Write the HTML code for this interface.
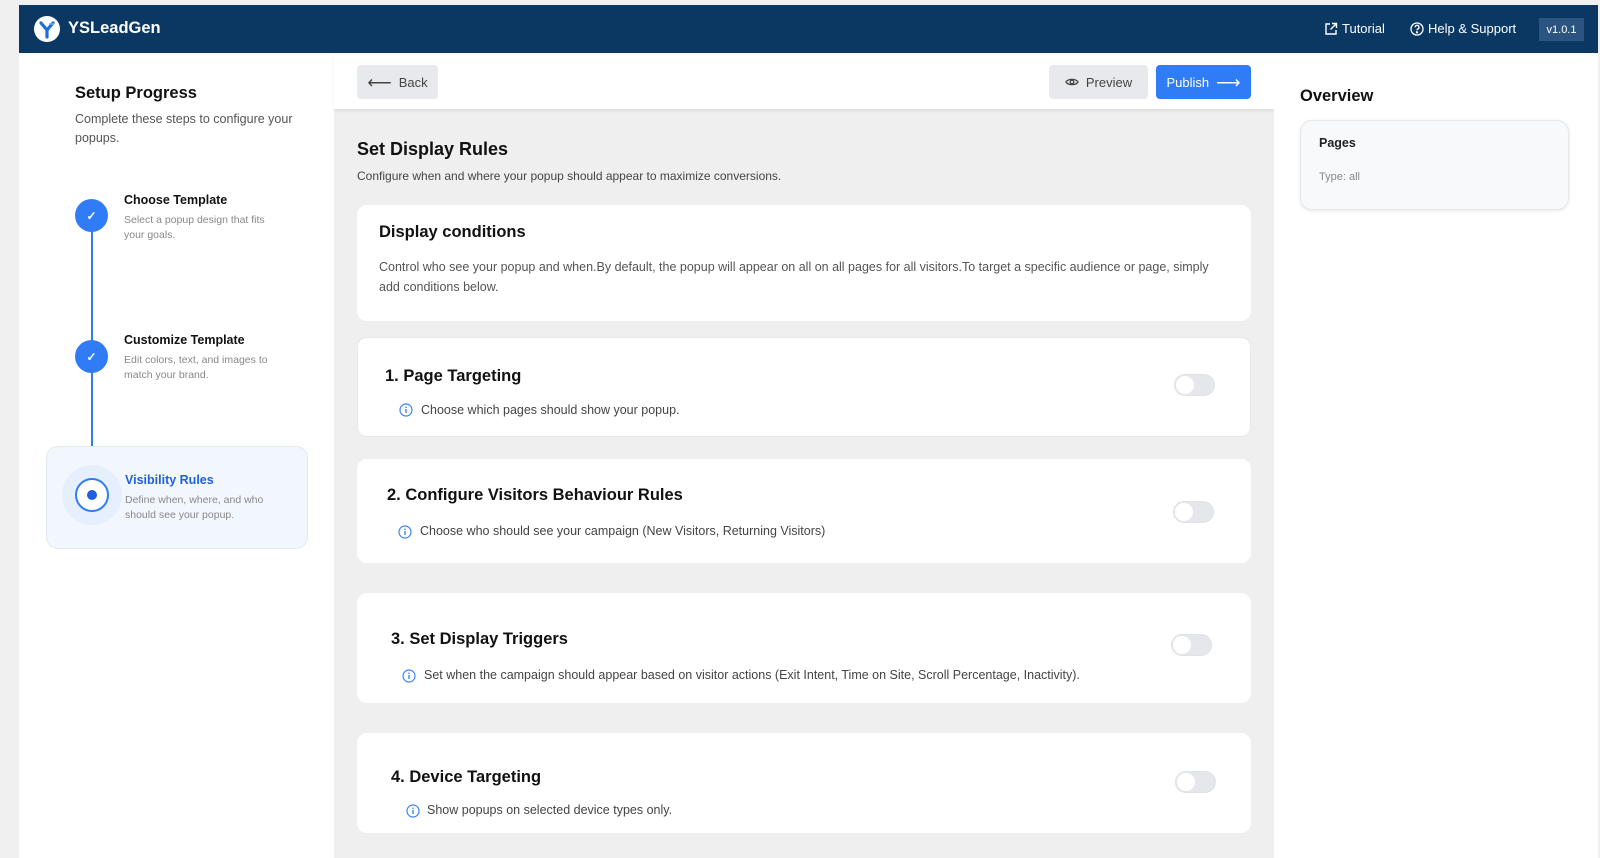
<!DOCTYPE html>
<html><head><meta charset="utf-8">
<style>
*{box-sizing:border-box;margin:0;padding:0}
body{width:1600px;height:858px;background:#f0f0f0;font-family:"Liberation Sans",sans-serif;position:relative;overflow:hidden;color:#111}
.a{position:absolute;white-space:nowrap}
.hdr{left:19px;top:5px;width:1579px;height:48px;background:#0a3862}
.side{left:19px;top:53px;width:315px;height:805px;background:#fff}
.main{left:334px;top:53px;width:940px;height:805px;background:#efefef}
.topbar{left:334px;top:53px;width:940px;height:56px;background:#fff;box-shadow:0 2px 3px rgba(0,0,0,.08)}
.right{left:1274px;top:53px;width:324px;height:805px;background:#fff}
.card{position:absolute;left:357px;width:894px;background:#fff;border-radius:10px;border:1px solid #e6e8ec}
.btn{position:absolute;border-radius:4px;font-size:13px;display:flex;align-items:center;justify-content:center;gap:7px}
.t{font-weight:bold;font-size:16.5px;color:#111}
.d{font-size:12.5px;color:#444}
.tog{position:absolute;width:41px;height:22px;border-radius:11px;background:#e5e7eb;border:1px solid #dfe2e7}
.tog::after{content:"";position:absolute;left:1px;top:1px;width:18px;height:18px;border-radius:50%;background:#fff}
.step{position:absolute;width:33px;height:33px;border-radius:50%;background:#2f7cf6;color:#fff;font-size:12px;display:flex;align-items:center;justify-content:center;font-weight:bold}
.st{font-weight:bold;font-size:12.5px}
.sd{font-size:10.5px;color:#888;line-height:15px}
.arr{font-size:17px;line-height:13px}
</style></head><body>
<div class="a hdr"></div>
<svg class="a" style="left:34px;top:16px" width="26" height="26" viewBox="0 0 26 26"><circle cx="13" cy="13" r="13" fill="#fff"/><path d="M7 7 L13 14 L13 21 M19 7 L13 14" stroke="#1b6fd6" stroke-width="3.2" fill="none" stroke-linecap="round"/><path d="M15 8h5" stroke="#5fb0ff" stroke-width="1.5"/></svg>
<div class="a" style="left:68px;top:19px;color:#fff;font-weight:bold;font-size:16.5px">YSLeadGen</div>
<svg class="a" style="left:1324px;top:22px" width="14" height="14" viewBox="0 0 14 14" fill="none" stroke="#fff" stroke-width="1.4"><path d="M6 2H2v10h10V8"/><path d="M8 1.5h4.5V6M12.5 1.5L6.5 7.5"/></svg>
<div class="a" style="left:1342px;top:21px;color:#fff;font-size:13px">Tutorial</div>
<svg class="a" style="left:1410px;top:22px" width="14" height="14" viewBox="0 0 14 14" fill="none" stroke="#fff" stroke-width="1.3"><circle cx="7" cy="7" r="6"/><path d="M5.2 5.3a1.9 1.9 0 1 1 2.6 1.7c-.6.3-.8.6-.8 1.3"/><circle cx="7" cy="10.3" r=".5" fill="#fff"/></svg>
<div class="a" style="left:1428px;top:21px;color:#fff;font-size:13px">Help &amp; Support</div>
<div class="a" style="left:1539px;top:18px;width:45px;height:23px;background:#2b5580;color:#fff;font-size:11px;display:flex;align-items:center;justify-content:center">v1.0.1</div>

<div class="a side"></div>
<div class="a" style="left:75px;top:84px;font-weight:bold;font-size:16.5px">Setup Progress</div>
<div class="a" style="left:75px;top:110px;font-size:12.5px;color:#555;line-height:19px;white-space:normal;width:240px">Complete these steps to configure your popups.</div>
<div class="a" style="left:91px;top:230px;width:2px;height:250px;background:#2f7cf6"></div>
<div class="a" style="left:46px;top:446px;width:262px;height:103px;background:#f2f7fe;border:1px solid #e3e9f2;border-radius:12px"></div>
<div class="step" style="left:75px;top:199px">✓</div>
<div class="step" style="left:75px;top:340px">✓</div>
<div class="a" style="left:62px;top:465px;width:60px;height:60px;border-radius:50%;background:#e6effd"></div>
<div class="a" style="left:75px;top:478px;width:34px;height:34px;border-radius:50%;background:#fff;border:2px solid #2f7cf6"></div>
<div class="a" style="left:87px;top:490px;width:10px;height:10px;border-radius:50%;background:#1f5fe0"></div>
<div class="a st" style="left:124px;top:193px">Choose Template</div>
<div class="a sd" style="left:124px;top:213px">Select a popup design that fits<br>your goals.</div>
<div class="a st" style="left:124px;top:333px">Customize Template</div>
<div class="a sd" style="left:124px;top:353px">Edit colors, text, and images to<br>match your brand.</div>
<div class="a st" style="left:125px;top:473px;color:#1f5fe0">Visibility Rules</div>
<div class="a sd" style="left:125px;top:493px">Define when, where, and who<br>should see your popup.</div>

<div class="a main"></div>
<div class="a topbar"></div>
<div class="btn" style="left:357px;top:65px;width:81px;height:34px;background:#e8e9ec;color:#444"><span class="arr">⟵</span>Back</div>
<div class="btn" style="left:1049px;top:65px;width:99px;height:34px;background:#e8e9ec;color:#444"><svg width="14" height="10" viewBox="0 0 14 10" fill="none" stroke="#444" stroke-width="1.3"><path d="M1 5C3 1.5 11 1.5 13 5C11 8.5 3 8.5 1 5Z"/><circle cx="7" cy="5" r="1.8"/></svg>Preview</div>
<div class="btn" style="left:1156px;top:65px;width:95px;height:34px;background:#2f7cf6;color:#fff">Publish<span class="arr">⟶</span></div>

<div class="a" style="left:357px;top:139px;font-weight:bold;font-size:18px">Set Display Rules</div>
<div class="a" style="left:357px;top:169px;font-size:12px;color:#444">Configure when and where your popup should appear to maximize conversions.</div>

<div class="card" style="top:205px;height:116px;border-color:#fff"></div>
<div class="a t" style="left:379px;top:223px">Display conditions</div>
<div class="a d" style="left:379px;top:257px;line-height:20px;white-space:normal;width:845px;color:#555">Control who see your popup and when.By default, the popup will appear on all on all pages for all visitors.To target a specific audience or page, simply add conditions below.</div>

<div class="card" style="top:337px;height:100px"></div>
<div class="a t" style="left:385px;top:367px">1. Page Targeting</div>
<div class="tog" style="left:1174px;top:374px"></div>
<svg class="a" style="left:399px;top:403px" width="14" height="14" viewBox="0 0 14 14"><circle cx="7" cy="7" r="6" fill="none" stroke="#3b82f6" stroke-width="1.2"/><path d="M7 6v4" stroke="#3b82f6" stroke-width="1.4"/><circle cx="7" cy="4.2" r=".8" fill="#3b82f6"/></svg>
<div class="a d" style="left:421px;top:403px">Choose which pages should show your popup.</div>

<div class="card" style="top:459px;height:104px;border-color:#fff"></div>
<div class="a t" style="left:387px;top:486px">2. Configure Visitors Behaviour Rules</div>
<div class="tog" style="left:1173px;top:501px"></div>
<svg class="a" style="left:398px;top:525px" width="14" height="14" viewBox="0 0 14 14"><circle cx="7" cy="7" r="6" fill="none" stroke="#3b82f6" stroke-width="1.2"/><path d="M7 6v4" stroke="#3b82f6" stroke-width="1.4"/><circle cx="7" cy="4.2" r=".8" fill="#3b82f6"/></svg>
<div class="a d" style="left:420px;top:524px">Choose who should see your campaign (New Visitors, Returning Visitors)</div>

<div class="card" style="top:593px;height:110px;border-color:#fff"></div>
<div class="a t" style="left:391px;top:630px">3. Set Display Triggers</div>
<div class="tog" style="left:1171px;top:634px"></div>
<svg class="a" style="left:402px;top:669px" width="14" height="14" viewBox="0 0 14 14"><circle cx="7" cy="7" r="6" fill="none" stroke="#3b82f6" stroke-width="1.2"/><path d="M7 6v4" stroke="#3b82f6" stroke-width="1.4"/><circle cx="7" cy="4.2" r=".8" fill="#3b82f6"/></svg>
<div class="a d" style="left:424px;top:668px">Set when the campaign should appear based on visitor actions (Exit Intent, Time on Site, Scroll Percentage, Inactivity).</div>

<div class="card" style="top:733px;height:100px;border-color:#fff"></div>
<div class="a t" style="left:391px;top:768px">4. Device Targeting</div>
<div class="tog" style="left:1175px;top:771px"></div>
<svg class="a" style="left:406px;top:804px" width="14" height="14" viewBox="0 0 14 14"><circle cx="7" cy="7" r="6" fill="none" stroke="#3b82f6" stroke-width="1.2"/><path d="M7 6v4" stroke="#3b82f6" stroke-width="1.4"/><circle cx="7" cy="4.2" r=".8" fill="#3b82f6"/></svg>
<div class="a d" style="left:427px;top:803px">Show popups on selected device types only.</div>

<div class="a right"></div>
<div class="a" style="left:1300px;top:87px;font-weight:bold;font-size:16.5px">Overview</div>
<div class="a" style="left:1300px;top:120px;width:269px;height:90px;background:#f8f9fb;border:1px solid #e5e7eb;border-radius:12px;box-shadow:0 1px 3px rgba(0,0,0,.1)"></div>
<div class="a" style="left:1319px;top:136px;font-weight:bold;font-size:12.5px;color:#222">Pages</div>
<div class="a" style="left:1319px;top:171px;font-size:11px;color:#888">Type: all</div>
</body></html>
